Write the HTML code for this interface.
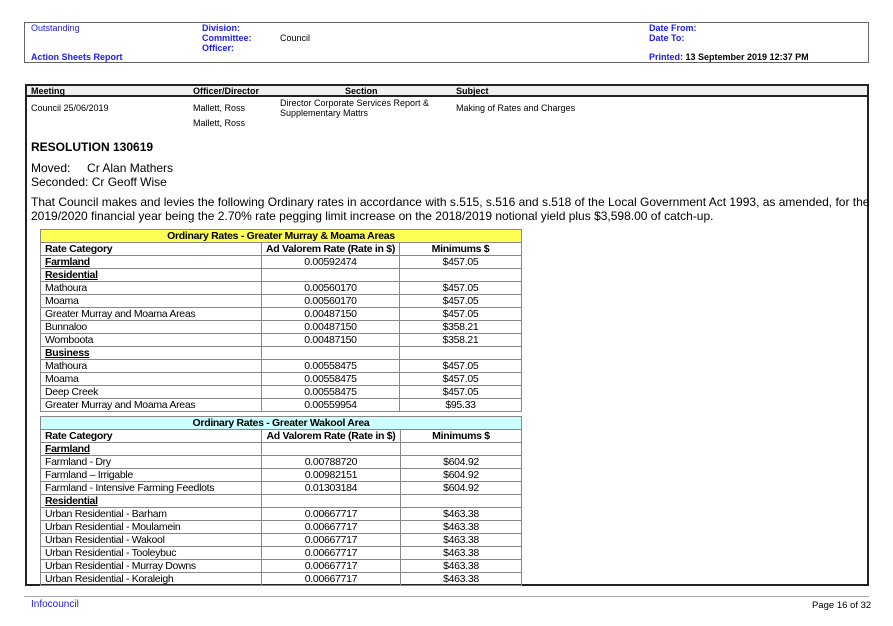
<!DOCTYPE html>
<html><head><meta charset="utf-8"><style>
*{margin:0;padding:0;box-sizing:border-box}
body{width:893px;height:626px;background:#fff;font-family:"Liberation Sans",Arial,sans-serif;color:#000;position:relative;overflow:hidden}
.a{position:absolute;white-space:nowrap}
.blue{color:#1a1aff}
.hb{position:absolute;left:24px;top:22px;width:845px;height:41px;border:1px solid #666}
.mb{position:absolute;left:25px;top:84px;width:844px;height:502px;border:2px solid #222;border-top:2px solid #222}
.hdr{position:absolute;left:27px;top:86px;width:840px;height:11px;background:#f0f0f0;border-bottom:2px solid #222}
.s9{font-size:9px}
.b{font-weight:bold}
table{position:absolute;left:40px;border-collapse:collapse;table-layout:fixed;font-family:"Liberation Sans Narrow","Liberation Sans",sans-serif;font-size:10.5px;letter-spacing:-0.3px}
td{border:1px solid #888;height:13px;line-height:11px;padding:0 4px;overflow:hidden;white-space:nowrap}
td.c{text-align:center}
tr.t td{text-align:center;font-weight:bold}
tr.h td{font-weight:bold}
u{font-weight:bold}
</style></head><body>
<div class="hb"></div>
<div class="a blue s9" style="left:31px;top:23px">Outstanding</div>
<div class="a blue s9 b" style="left:31px;top:52px">Action Sheets Report</div>
<div class="a blue s9 b" style="left:202px;top:23px;line-height:10px">Division:<br>Committee:<br>Officer:</div>
<div class="a s9" style="left:280px;top:33px">Council</div>
<div class="a blue s9 b" style="left:649px;top:23px;line-height:10px">Date From:<br>Date To:</div>
<div class="a s9 b" style="left:649px;top:52px"><span class="blue">Printed:</span> 13 September 2019 12:37 PM</div>

<div class="mb"></div>
<div class="hdr"></div>
<div class="a s9 b" style="left:31px;top:86px">Meeting</div>
<div class="a s9 b" style="left:193px;top:86px">Officer/Director</div>
<div class="a s9 b" style="left:345px;top:86px">Section</div>
<div class="a s9 b" style="left:456px;top:86px">Subject</div>
<div class="a s9" style="left:31px;top:103px">Council 25/06/2019</div>
<div class="a s9" style="left:193px;top:103px">Mallett, Ross</div>
<div class="a s9" style="left:193px;top:118px">Mallett, Ross</div>
<div class="a s9" style="left:280px;top:98px;line-height:10px">Director Corporate Services Report &amp;<br>Supplementary Mattrs</div>
<div class="a s9" style="left:456px;top:103px">Making of Rates and Charges</div>

<div class="a b" style="left:31px;top:140px;font-size:12px">RESOLUTION 130619</div>
<div class="a" style="left:31px;top:161px;font-size:12px;line-height:14px">Moved:&nbsp;&nbsp;&nbsp;&nbsp; Cr Alan Mathers<br>Seconded: Cr Geoff Wise</div>
<div class="a" style="left:31px;top:195px;font-size:12px;line-height:14px">That Council makes and levies the following Ordinary rates in accordance with s.515, s.516 and s.518 of the Local Government Act 1993, as amended, for the<br>2019/2020 financial year being the 2.70% rate pegging limit increase on the 2018/2019 notional yield plus $3,598.00 of catch-up.</div>

<table style="top:229px;width:481px">
<colgroup><col style="width:221px"><col style="width:138px"><col style="width:122px"></colgroup>
<tr class="t"><td colspan="3" style="background:#ffff55">Ordinary Rates - Greater Murray &amp; Moama Areas</td></tr>
<tr class="h"><td>Rate Category</td><td class="c">Ad Valorem Rate (Rate in $)</td><td class="c">Minimums $</td></tr>
<tr><td><u>Farmland</u></td><td class="c">0.00592474</td><td class="c">$457.05</td></tr>
<tr><td><u>Residential</u></td><td></td><td></td></tr>
<tr><td>Mathoura</td><td class="c">0.00560170</td><td class="c">$457.05</td></tr>
<tr><td>Moama</td><td class="c">0.00560170</td><td class="c">$457.05</td></tr>
<tr><td>Greater Murray and Moama Areas</td><td class="c">0.00487150</td><td class="c">$457.05</td></tr>
<tr><td>Bunnaloo</td><td class="c">0.00487150</td><td class="c">$358.21</td></tr>
<tr><td>Womboota</td><td class="c">0.00487150</td><td class="c">$358.21</td></tr>
<tr><td><u>Business</u></td><td></td><td></td></tr>
<tr><td>Mathoura</td><td class="c">0.00558475</td><td class="c">$457.05</td></tr>
<tr><td>Moama</td><td class="c">0.00558475</td><td class="c">$457.05</td></tr>
<tr><td>Deep Creek</td><td class="c">0.00558475</td><td class="c">$457.05</td></tr>
<tr><td>Greater Murray and Moama Areas</td><td class="c">0.00559954</td><td class="c">$95.33</td></tr>
</table>

<table style="top:416px;width:481px">
<colgroup><col style="width:221px"><col style="width:139px"><col style="width:121px"></colgroup>
<tr class="t"><td colspan="3" style="background:#ccffff">Ordinary Rates - Greater Wakool Area</td></tr>
<tr class="h"><td>Rate Category</td><td class="c">Ad Valorem Rate (Rate in $)</td><td class="c">Minimums $</td></tr>
<tr><td><u>Farmland</u></td><td></td><td></td></tr>
<tr><td>Farmland - Dry</td><td class="c">0.00788720</td><td class="c">$604.92</td></tr>
<tr><td>Farmland – Irrigable</td><td class="c">0.00982151</td><td class="c">$604.92</td></tr>
<tr><td>Farmland - Intensive Farming Feedlots</td><td class="c">0.01303184</td><td class="c">$604.92</td></tr>
<tr><td><u>Residential</u></td><td></td><td></td></tr>
<tr><td>Urban Residential - Barham</td><td class="c">0.00667717</td><td class="c">$463.38</td></tr>
<tr><td>Urban Residential - Moulamein</td><td class="c">0.00667717</td><td class="c">$463.38</td></tr>
<tr><td>Urban Residential - Wakool</td><td class="c">0.00667717</td><td class="c">$463.38</td></tr>
<tr><td>Urban Residential - Tooleybuc</td><td class="c">0.00667717</td><td class="c">$463.38</td></tr>
<tr><td>Urban Residential - Murray Downs</td><td class="c">0.00667717</td><td class="c">$463.38</td></tr>
<tr><td>Urban Residential - Koraleigh</td><td class="c">0.00667717</td><td class="c">$463.38</td></tr>
</table>

<div class="a" style="left:24px;top:596px;width:845px;border-top:1px solid #aaa"></div>
<div class="a blue" style="left:31px;top:599px;font-size:10px;font-family:'Liberation Sans Narrow','Liberation Sans',sans-serif">Infocouncil</div>
<div class="a" style="left:812px;top:600px;font-size:9.5px;font-family:'Liberation Sans Narrow','Liberation Sans',sans-serif">Page 16 of 32</div>
</body></html>
